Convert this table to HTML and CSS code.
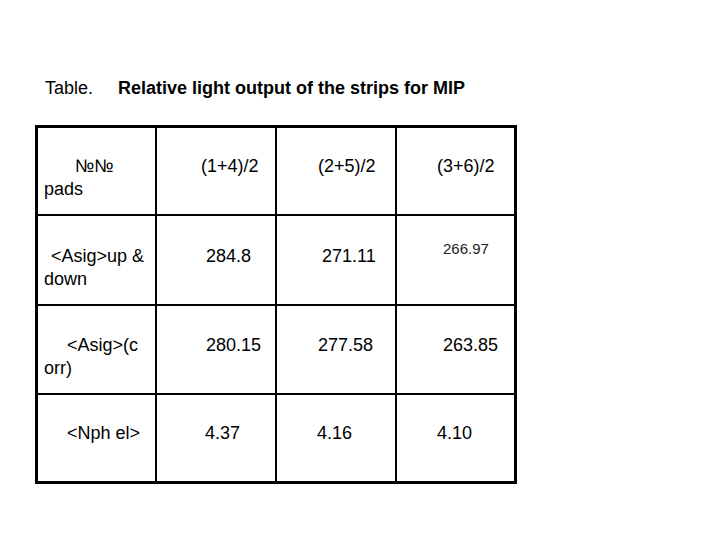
FILE: index.html
```html
<!DOCTYPE html>
<html lang="en">
<head>
<meta charset="utf-8">
<title>Relative light output of the strips for MIP</title>
<link rel="stylesheet" href="styles.css">
</head>
<body>
<div class="page">
  <div class="caption">
    <span class="caption-label">Table.</span>
    <span class="caption-title">Relative light output of the strips for MIP</span>
  </div>
  <div class="grid">
    <div class="cell first r1"><span class="lead ind-31">№№</span><br>pads</div>
    <div class="cell r1 ind-44">(1+4)/2</div>
    <div class="cell r1 ind-41">(2+5)/2</div>
    <div class="cell r1 ind-40">(3+6)/2</div>

    <div class="cell first r2"><span class="lead ind-7">&lt;Asig&gt;up &amp;</span><br>down</div>
    <div class="cell r2 ind-49">284.8</div>
    <div class="cell r2 ind-45">271.11</div>
    <div class="cell r2 ind-46 small">266.97</div>

    <div class="cell first r3"><span class="lead ind-23">&lt;Asig&gt;(c</span><br>orr)</div>
    <div class="cell r3 ind-49">280.15</div>
    <div class="cell r3 ind-41">277.58</div>
    <div class="cell r3 ind-46">263.85</div>

    <div class="cell first r4"><span class="lead ind-23">&lt;Nph el&gt;</span></div>
    <div class="cell r4 ind-48">4.37</div>
    <div class="cell r4 ind-40">4.16</div>
    <div class="cell r4 ind-40">4.10</div>
  </div>
</div>
</body>
</html>
```
FILE: styles.css
```css
html, body {
  margin: 0;
  padding: 0;
  background: #ffffff;
}

.page {
  width: 720px;
  height: 540px;
  padding: 78px 0 0 45px;
  box-sizing: border-box;
  font-family: "Liberation Sans", Arial, sans-serif;
  color: #000;
}

.caption {
  display: flex;
  align-items: baseline;
  font-size: 18px;
  line-height: 21px;
  height: 21px;
}

.caption-label {
  width: 73px;
}

.caption-title {
  font-weight: bold;
}

.grid {
  margin: 26px 0 0 -10px;
  display: grid;
  grid-template-columns: 117px 118px 118px 117px;
  grid-template-rows: 86px 88px 87px 86px;
  gap: 2px;
  padding: 3px;
  width: max-content;
  background: #000;
}

.cell {
  background: #fff;
  font-size: 18px;
  line-height: 23px;
  white-space: nowrap;
  box-sizing: border-box;
}

.r1 { padding-top: 27px; }
.r2 { padding-top: 29px; }
.r3 { padding-top: 28px; }
.r4 { padding-top: 27px; }

.first {
  padding-left: 6px;
}

.lead {
  display: inline-block;
}

.cell.small {
  font-size: 15px;
  color: #222;
  padding-top: 21px;
}

.ind-7 { padding-left: 7px; }
.ind-23 { padding-left: 23px; }
.ind-31 { padding-left: 31px; }
.ind-40 { padding-left: 40px; }
.ind-41 { padding-left: 41px; }
.ind-44 { padding-left: 44px; }
.ind-45 { padding-left: 45px; }
.ind-46 { padding-left: 46px; }
.ind-48 { padding-left: 48px; }
.ind-49 { padding-left: 49px; }
```
